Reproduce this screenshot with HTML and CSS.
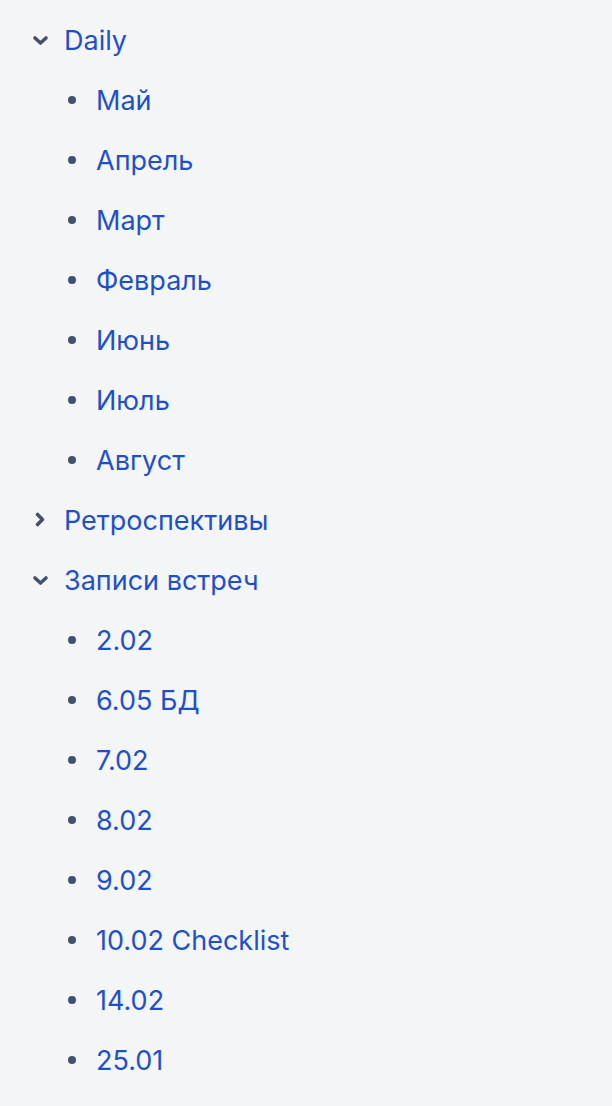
FILE: index.html
```html
<!DOCTYPE html>
<html lang="ru">
<head>
<meta charset="utf-8">
<link rel="stylesheet" href="styles.css">
</head>
<body>
<ul class="tree">
  <li class="node">
    <div class="row parent"><span class="chev"><svg viewBox="0 0 24 24" width="24" height="24"><path d="M7 10l5.5 5 5.5-5" fill="none" stroke="currentColor" stroke-width="3.6" stroke-linecap="round" stroke-linejoin="round"/></svg></span><a class="label">Daily</a></div>
    <ul class="children">
      <li class="row child"><span class="dot"></span><a class="label">Май</a></li>
      <li class="row child"><span class="dot"></span><a class="label">Апрель</a></li>
      <li class="row child"><span class="dot"></span><a class="label">Март</a></li>
      <li class="row child"><span class="dot"></span><a class="label">Февраль</a></li>
      <li class="row child"><span class="dot"></span><a class="label">Июнь</a></li>
      <li class="row child"><span class="dot"></span><a class="label">Июль</a></li>
      <li class="row child"><span class="dot"></span><a class="label">Август</a></li>
    </ul>
  </li>
  <li class="node">
    <div class="row parent"><span class="chev"><svg viewBox="0 0 24 24" width="24" height="24"><path d="M9.5 6.5l5 5-5 5" fill="none" stroke="currentColor" stroke-width="3.6" stroke-linecap="round" stroke-linejoin="round"/></svg></span><a class="label">Ретроспективы</a></div>
  </li>
  <li class="node">
    <div class="row parent"><span class="chev"><svg viewBox="0 0 24 24" width="24" height="24"><path d="M7 10l5.5 5 5.5-5" fill="none" stroke="currentColor" stroke-width="3.6" stroke-linecap="round" stroke-linejoin="round"/></svg></span><a class="label">Записи встреч</a></div>
    <ul class="children">
      <li class="row child"><span class="dot"></span><a class="label">2.02</a></li>
      <li class="row child"><span class="dot"></span><a class="label">6.05 БД</a></li>
      <li class="row child"><span class="dot"></span><a class="label">7.02</a></li>
      <li class="row child"><span class="dot"></span><a class="label">8.02</a></li>
      <li class="row child"><span class="dot"></span><a class="label">9.02</a></li>
      <li class="row child"><span class="dot"></span><a class="label">10.02 Checklist</a></li>
      <li class="row child"><span class="dot"></span><a class="label">14.02</a></li>
      <li class="row child"><span class="dot"></span><a class="label">25.01</a></li>
    </ul>
  </li>
</ul>
</body>
</html>
```
FILE: styles.css
```css
html, body {
  margin: 0;
  padding: 0;
  background: #f4f5f7;
}
body {
  font-family: Inter, "Noto Sans", sans-serif;
  font-size: 27px;
  color: #1f50c8;
}
.tree, .children {
  list-style: none;
  margin: 0;
  padding: 0;
}
.tree {
  padding-top: 10px;
}
.row {
  display: flex;
  align-items: center;
  height: 60px;
}
.parent {
  padding-left: 28px;
  gap: 12px;
}
.chev {
  display: flex;
  width: 24px;
  height: 24px;
  color: #42526e;
}
.child {
  padding-left: 62px;
  gap: 14px;
}
.dot {
  width: 20px;
  display: flex;
  justify-content: center;
}
.dot::before {
  content: "";
  width: 8.5px;
  height: 8.5px;
  border-radius: 50%;
  background: #42526e;
}
.label {
  color: #1f50c8;
  line-height: 1;
  text-decoration: none;
}
```
